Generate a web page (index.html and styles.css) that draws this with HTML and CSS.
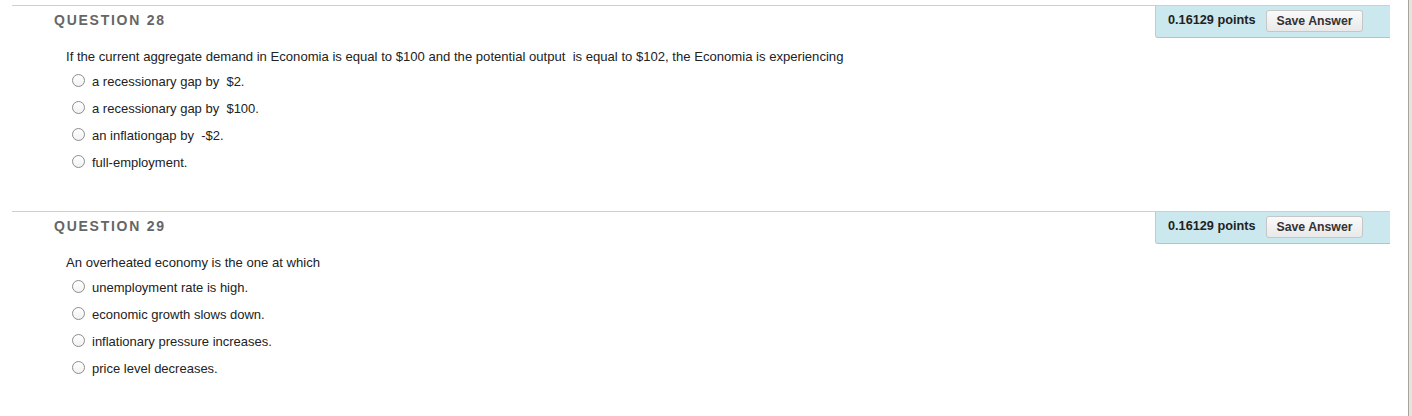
FILE: index.html
```html
<!DOCTYPE html>
<html>
<head>
<meta charset="utf-8">
<link rel="stylesheet" href="styles.css">
</head>
<body>
<div class="page">
  <div class="main">
    <div class="question">
      <div class="qhead">
        <div class="qtitle">QUESTION 28</div>
        <div class="qpoints">
          <span class="pts">0.16129 points</span>
          <button class="save">Save Answer</button>
        </div>
      </div>
      <div class="qtext">If the current aggregate demand in Economia is equal to $100 and the potential output &nbsp;is equal to $102, the Economia is experiencing</div>
      <ul class="options">
        <li class="opt"><span class="radio"></span><span>a recessionary gap by &nbsp;$2.</span></li>
        <li class="opt"><span class="radio"></span><span>a recessionary gap by &nbsp;$100.</span></li>
        <li class="opt"><span class="radio"></span><span>an inflationgap by &nbsp;-$2.</span></li>
        <li class="opt"><span class="radio"></span><span>full-employment.</span></li>
      </ul>
    </div>
    <div class="question">
      <div class="qhead">
        <div class="qtitle">QUESTION 29</div>
        <div class="qpoints">
          <span class="pts">0.16129 points</span>
          <button class="save">Save Answer</button>
        </div>
      </div>
      <div class="qtext">An overheated economy is the one at which</div>
      <ul class="options">
        <li class="opt"><span class="radio"></span><span>unemployment rate is high.</span></li>
        <li class="opt"><span class="radio"></span><span>economic growth slows down.</span></li>
        <li class="opt"><span class="radio"></span><span>inflationary pressure increases.</span></li>
        <li class="opt"><span class="radio"></span><span>price level decreases.</span></li>
      </ul>
    </div>
  </div>
  <div class="edge"></div>
</div>
</body>
</html>
```

FILE: styles.css
```css
html, body {
  margin: 0;
  padding: 0;
  background: #ffffff;
}
body {
  font-family: "Liberation Sans", Arial, Helvetica, sans-serif;
  color: #222;
}
.page {
  display: flex;
  width: 1412px;
  height: 416px;
  overflow: hidden;
}
.main {
  width: 1408px;
  padding-top: 5px;
  box-sizing: border-box;
}
.edge {
  width: 4px;
  box-sizing: border-box;
  border-left: 1px solid #a4a49e;
  background: #e7e5db;
}
.question {
  margin-left: 12px;
  width: 1378px;
  border-top: 1px solid #cfcfcf;
  margin-bottom: 35px;
}
.qhead {
  display: flex;
  justify-content: space-between;
  align-items: flex-start;
  height: 32px;
}
.qtitle {
  padding-left: 42px;
  padding-top: 6px;
  font-size: 14px;
  line-height: 16px;
  font-weight: bold;
  letter-spacing: 1.75px;
  color: #666;
}
.qpoints {
  width: 235px;
  height: 32px;
  box-sizing: border-box;
  background: #cbe8ee;
  border-left: 1px solid #bccbcf;
  border-bottom: 1px solid #b4c3c7;
  border-bottom-left-radius: 3px;
  display: flex;
  align-items: center;
  padding: 0 0 1px 12px;
  gap: 11px;
}
.pts {
  font-size: 12.7px;
  font-weight: bold;
  color: #222;
  line-height: 14px;
  margin-top: -3px;
}
.save {
  font-family: "Liberation Sans", Arial, Helvetica, sans-serif;
  font-size: 12.3px;
  font-weight: bold;
  color: #333;
  height: 22px;
  padding: 0 9px;
  background: linear-gradient(#fafafa, #e9e9e9);
  border: 1px solid #c6c6c6;
  border-radius: 3px;
  line-height: 20px;
}
.qtext {
  padding-left: 54px;
  margin-top: 11px;
  font-size: 13.1px;
  line-height: 16px;
  color: #222;
}
.options {
  list-style: none;
  margin: 3px 0 0 0;
  padding: 0 0 0 60px;
}
.opt {
  display: flex;
  align-items: center;
  height: 27px;
  font-size: 13px;
  color: #222;
}
.radio {
  width: 13px;
  height: 13px;
  box-sizing: border-box;
  border: 1px solid #8c8c8c;
  border-radius: 50%;
  background: linear-gradient(#ffffff, #f2f2f2);
  margin-right: 7px;
  margin-top: -2px;
  flex: none;
}
```
